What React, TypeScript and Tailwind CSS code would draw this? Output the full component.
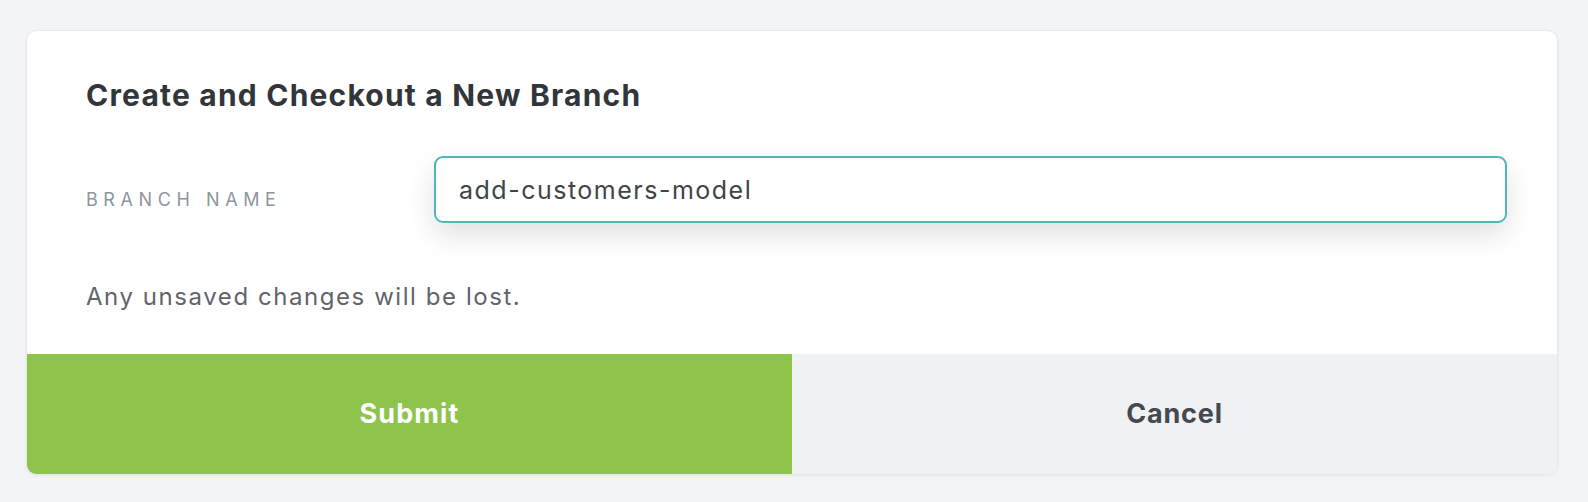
import { useState } from 'react';

export default function App() {
  const [branch, setBranch] = useState('add-customers-model');

  return (
    <div className="min-h-screen bg-[#f3f4f6] pl-[26px] pr-[30px] pt-[30px] font-['Inter','Noto_Sans',sans-serif]">
      <div className="overflow-hidden rounded-[10px] border border-[#e6e8eb] bg-white shadow-[0_1px_3px_rgba(0,0,0,0.05)]">
        {/* Body */}
        <div className="pl-[59px] pr-[50px] pt-[46px] pb-[42px]">
          <h2 className="text-[30px] font-bold leading-[36px] tracking-[0.04em] text-[#323539]">
            Create and Checkout a New Branch
          </h2>

          <div className="mt-[43px] flex items-start">
            <label
              htmlFor="branch"
              className="w-[348px] shrink-0 pt-[32px] text-[18px] leading-[24px] uppercase tracking-[0.31em] text-[#8e969d]"
            >
              Branch Name
            </label>
            <input
              id="branch"
              value={branch}
              onChange={(e) => setBranch(e.target.value)}
              className="h-[67px] flex-1 rounded-[9px] border-2 border-[#4fb7b5] bg-white px-[23px] text-[25px] tracking-[0.06em] text-[#404449] shadow-[0_12px_28px_rgba(0,0,0,0.12)] outline-none"
            />
          </div>

          <p className="mt-[59px] text-[24px] leading-[30px] tracking-[0.065em] text-[#5f656b]">
            Any unsaved changes will be lost.
          </p>
        </div>

        {/* Footer actions */}
        <div className="flex h-[120px]">
          <button className="flex-1 bg-[#8ec44c] text-[27px] font-bold tracking-[0.04em] text-white">
            Submit
          </button>
          <button className="flex-1 bg-[#f0f1f3] text-[27px] font-bold tracking-[0.03em] text-[#45494f]">
            Cancel
          </button>
        </div>
      </div>
    </div>
  );
}
